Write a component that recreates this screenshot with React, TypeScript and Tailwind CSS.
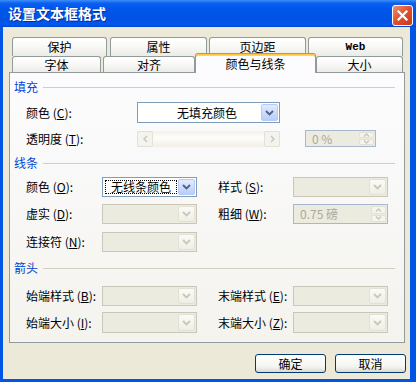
import React from "react";

const font = "font-['Noto_Sans_CJK_SC','Noto_Sans',sans-serif]";

function DownArrow({ disabled }: { disabled?: boolean }) {
  return (
    <svg width="9" height="6" viewBox="0 0 9 6">
      <path d="M1 1L4.5 4.5L8 1" fill="none" stroke={disabled ? "#c9c7ba" : "#4d6185"} strokeWidth="1.8" />
    </svg>
  );
}

function Combo({ cls, text, focus, disabled }: { cls: string; text?: string; focus?: boolean; disabled?: boolean }) {
  return (
    <div
      className={`${cls} flex p-[1px] border ${
        disabled ? "border-[#c9c7ba] bg-[#ecebdf]" : "border-[#7f9db9] bg-white"
      }`}
    >
      <div className="flex-1 flex min-w-0">
        {text &&
          (focus ? (
            <div className="flex-1 m-[1px] border border-dotted border-black flex items-center justify-center text-[12px] leading-none">
              {text}
            </div>
          ) : (
            <div className="flex-1 flex items-center justify-center text-[12px] leading-none pl-[14px]">{text}</div>
          ))}
      </div>
      <div
        className={`w-[17px] flex items-center justify-center rounded-[2px] border ${
          disabled
            ? "border-[#e3e1d5] bg-[linear-gradient(#fbfaf6,#efeee6)]"
            : "border-[#b6c9f7] bg-[linear-gradient(#e3ebfe,#b9cdf8)]"
        }`}
      >
        <DownArrow disabled={disabled} />
      </div>
    </div>
  );
}

function Label({ text, k, cls }: { text: string; k: string; cls: string }) {
  return (
    <div className={`${cls} text-[12px] leading-none whitespace-nowrap`}>
      {text} (<u>{k}</u>):
    </div>
  );
}

function Header({ title, cls }: { title: string; cls: string }) {
  return (
    <div className={`flex items-center h-[16px] pl-[4px] pr-[9px] ${cls}`}>
      <span className="text-[#0046d5] text-[12px] leading-none">{title}</span>
      <div className="flex-1 h-px bg-[#d0d0bf] ml-[5px]" />
    </div>
  );
}

function Spinner({ cls, text }: { cls: string; text: string }) {
  return (
    <div className={`${cls} flex p-[1px] border border-[#a5b8ce] bg-[#ecebdf]`}>
      <div className="flex-1 flex items-center pl-[5px] text-[12px] leading-none text-[#aca899]">{text}</div>
      <div className="w-[15px] flex flex-col gap-px">
        <div className="flex-1 flex items-center justify-center rounded-[2px] border border-[#e3e1d5] bg-[#f5f4ee]">
          <svg width="7" height="4" viewBox="0 0 7 4">
            <path d="M1 3.5L3.5 1L6 3.5" fill="none" stroke="#c9c7ba" strokeWidth="1.3" />
          </svg>
        </div>
        <div className="flex-1 flex items-center justify-center rounded-[2px] border border-[#e3e1d5] bg-[#f5f4ee]">
          <svg width="7" height="4" viewBox="0 0 7 4">
            <path d="M1 0.5L3.5 3L6 0.5" fill="none" stroke="#c9c7ba" strokeWidth="1.3" />
          </svg>
        </div>
      </div>
    </div>
  );
}

function ScrollBar() {
  return (
    <div className="w-[143px] h-[16px] flex bg-[linear-gradient(#f3f1ea,#fdfdfb_40%,#f1efe6)]">
      <div className="w-[16px] h-[16px] flex items-center justify-center rounded-[2px] border border-[#e3e1d5] bg-[#f4f3ed]">
        <svg width="5" height="8" viewBox="0 0 5 8">
          <path d="M4 1L1 4L4 7" fill="none" stroke="#c9c7ba" strokeWidth="1.5" />
        </svg>
      </div>
      <div className="flex-1" />
      <div className="w-[16px] h-[16px] flex items-center justify-center rounded-[2px] border border-[#e3e1d5] bg-[#f4f3ed]">
        <svg width="5" height="8" viewBox="0 0 5 8">
          <path d="M1 1L4 4L1 7" fill="none" stroke="#c9c7ba" strokeWidth="1.5" />
        </svg>
      </div>
    </div>
  );
}

function Tab({ label, cls, mono }: { label: string; cls: string; mono?: boolean }) {
  return (
    <div
      className={`${cls} border border-b-0 border-[#919b9c] rounded-t-[3px] bg-[linear-gradient(#ffffff,#fafaf8_40%,#ecebe6)] flex items-center justify-center leading-none ${
        mono ? "font-['Liberation_Mono',monospace] font-semibold text-[11px]" : "text-[12px]"
      }`}
    >
      {label}
    </div>
  );
}

function Button({ label }: { label: string }) {
  return (
    <div className="w-[71px] h-[19px] rounded-[3px] border border-[#003c74] bg-[linear-gradient(#ffffff,#f4f4f0_70%,#dcd8ce)] flex items-center justify-center text-[12px] leading-none">
      {label}
    </div>
  );
}

export default function App() {
  return (
    <div className={`w-[416px] h-[382px] flex flex-col bg-[#0055e5] ${font} text-black select-none`}>
      {/* Title bar */}
      <div className="h-[27px] flex pl-[8px] bg-[linear-gradient(180deg,#3d8ff8_0%,#0b60f0_12%,#0056ec_30%,#0053e2_70%,#0057ec_90%,#0047d6_100%)]">
        <span className="self-center text-white text-[14px] font-bold [text-shadow:1px_1px_0_#0a2a9c]">
          设置文本框格式
        </span>
        <div className="ml-auto mr-[3px] mt-[5px] w-[21px] h-[21px] rounded-[3px] border border-white bg-[linear-gradient(135deg,#ee8f73,#e0502c_50%,#c8381c)] flex items-center justify-center">
          <svg width="11" height="11" viewBox="0 0 11 11">
            <path d="M1.5 1.5L9.5 9.5M9.5 1.5L1.5 9.5" stroke="white" strokeWidth="2.2" strokeLinecap="square" />
          </svg>
        </div>
      </div>

      {/* Client */}
      <div className="flex-1 flex pl-[3px] pr-[6px] pb-[3px]">
        <div className="flex-1 bg-[#ece9d8] flex flex-col pt-[10px]">
          {/* Tabs */}
          <div className="flex h-[19px]">
            <Tab label="保护" cls="ml-[9px] w-[95px] h-[19px]" />
            <Tab label="属性" cls="ml-[3px] w-[97px] h-[19px]" />
            <Tab label="页边距" cls="ml-[2px] w-[97px] h-[19px]" />
            <Tab label="Web" cls="ml-[2px] w-[95px] h-[19px]" mono />
          </div>
          <div className="flex h-[16px] items-end">
            <Tab label="字体" cls="ml-[9px] w-[89px] h-[16px]" />
            <Tab label="对齐" cls="ml-[2px] w-[92px] h-[16px]" />
            <div className="relative z-10 -mb-px w-[121px] h-[20px] border border-b-0 border-[#919b9c] border-t-[#e68b2c] rounded-t-[3px] shadow-[inset_0_1px_0_#ffc73c,inset_0_2px_0_#ffd65c] bg-[#fcfcfe] flex items-center justify-center text-[12px] leading-none">
              颜色与线条
            </div>
            <Tab label="大小" cls="w-[87px] h-[16px]" />
          </div>

          {/* Panel */}
          <div className="ml-[6px] w-[396px] h-[271px] border border-[#919b9c] bg-[linear-gradient(180deg,#fcfcfe,#f4f3ee)] flex flex-col">
            <Header title="填充" cls="mt-[6px]" />
            <div className="mt-[7px] h-[21px] flex items-center pl-[16px]">
              <Label text="颜色" k="C" cls="w-[111px]" />
              <Combo cls="w-[143px] h-[21px]" text="无填充颜色" />
            </div>
            <div className="mt-[7px] h-[17px] flex items-center pl-[16px]">
              <Label text="透明度" k="T" cls="w-[111px]" />
              <ScrollBar />
              <Spinner cls="ml-[25px] w-[71px] h-[17px]" text="0 %" />
            </div>

            <Header title="线条" cls="mt-[8px]" />
            <div className="mt-[6px] h-[20px] flex items-center pl-[16px]">
              <Label text="颜色" k="O" cls="w-[76px]" />
              <Combo cls="w-[95px] h-[20px]" text="无线条颜色" focus />
              <Label text="样式" k="S" cls="ml-[21px] w-[75px]" />
              <Combo cls="w-[95px] h-[20px]" disabled />
            </div>
            <div className="mt-[7px] h-[20px] flex items-center pl-[16px]">
              <Label text="虚实" k="D" cls="w-[76px]" />
              <Combo cls="w-[95px] h-[20px]" disabled />
              <Label text="粗细" k="W" cls="ml-[21px] w-[75px]" />
              <Spinner cls="w-[95px] h-[20px]" text="0.75 磅" />
            </div>
            <div className="mt-[8px] h-[20px] flex items-center pl-[16px]">
              <Label text="连接符" k="N" cls="w-[76px]" />
              <Combo cls="w-[95px] h-[20px]" disabled />
            </div>

            <Header title="箭头" cls="mt-[8px]" />
            <div className="mt-[10px] h-[20px] flex items-center pl-[16px]">
              <Label text="始端样式" k="B" cls="w-[76px]" />
              <Combo cls="w-[95px] h-[20px]" disabled />
              <Label text="末端样式" k="E" cls="ml-[21px] w-[75px]" />
              <Combo cls="w-[95px] h-[20px]" disabled />
            </div>
            <div className="mt-[6px] h-[21px] flex items-center pl-[16px]">
              <Label text="始端大小" k="I" cls="w-[76px]" />
              <Combo cls="w-[95px] h-[21px]" disabled />
              <Label text="末端大小" k="Z" cls="ml-[21px] w-[75px]" />
              <Combo cls="w-[95px] h-[21px]" disabled />
            </div>
          </div>

          {/* Buttons */}
          <div className="mt-[11px] flex justify-end gap-[9px] pr-[4px]">
            <Button label="确定" />
            <Button label="取消" />
          </div>
        </div>
      </div>
    </div>
  );
}
